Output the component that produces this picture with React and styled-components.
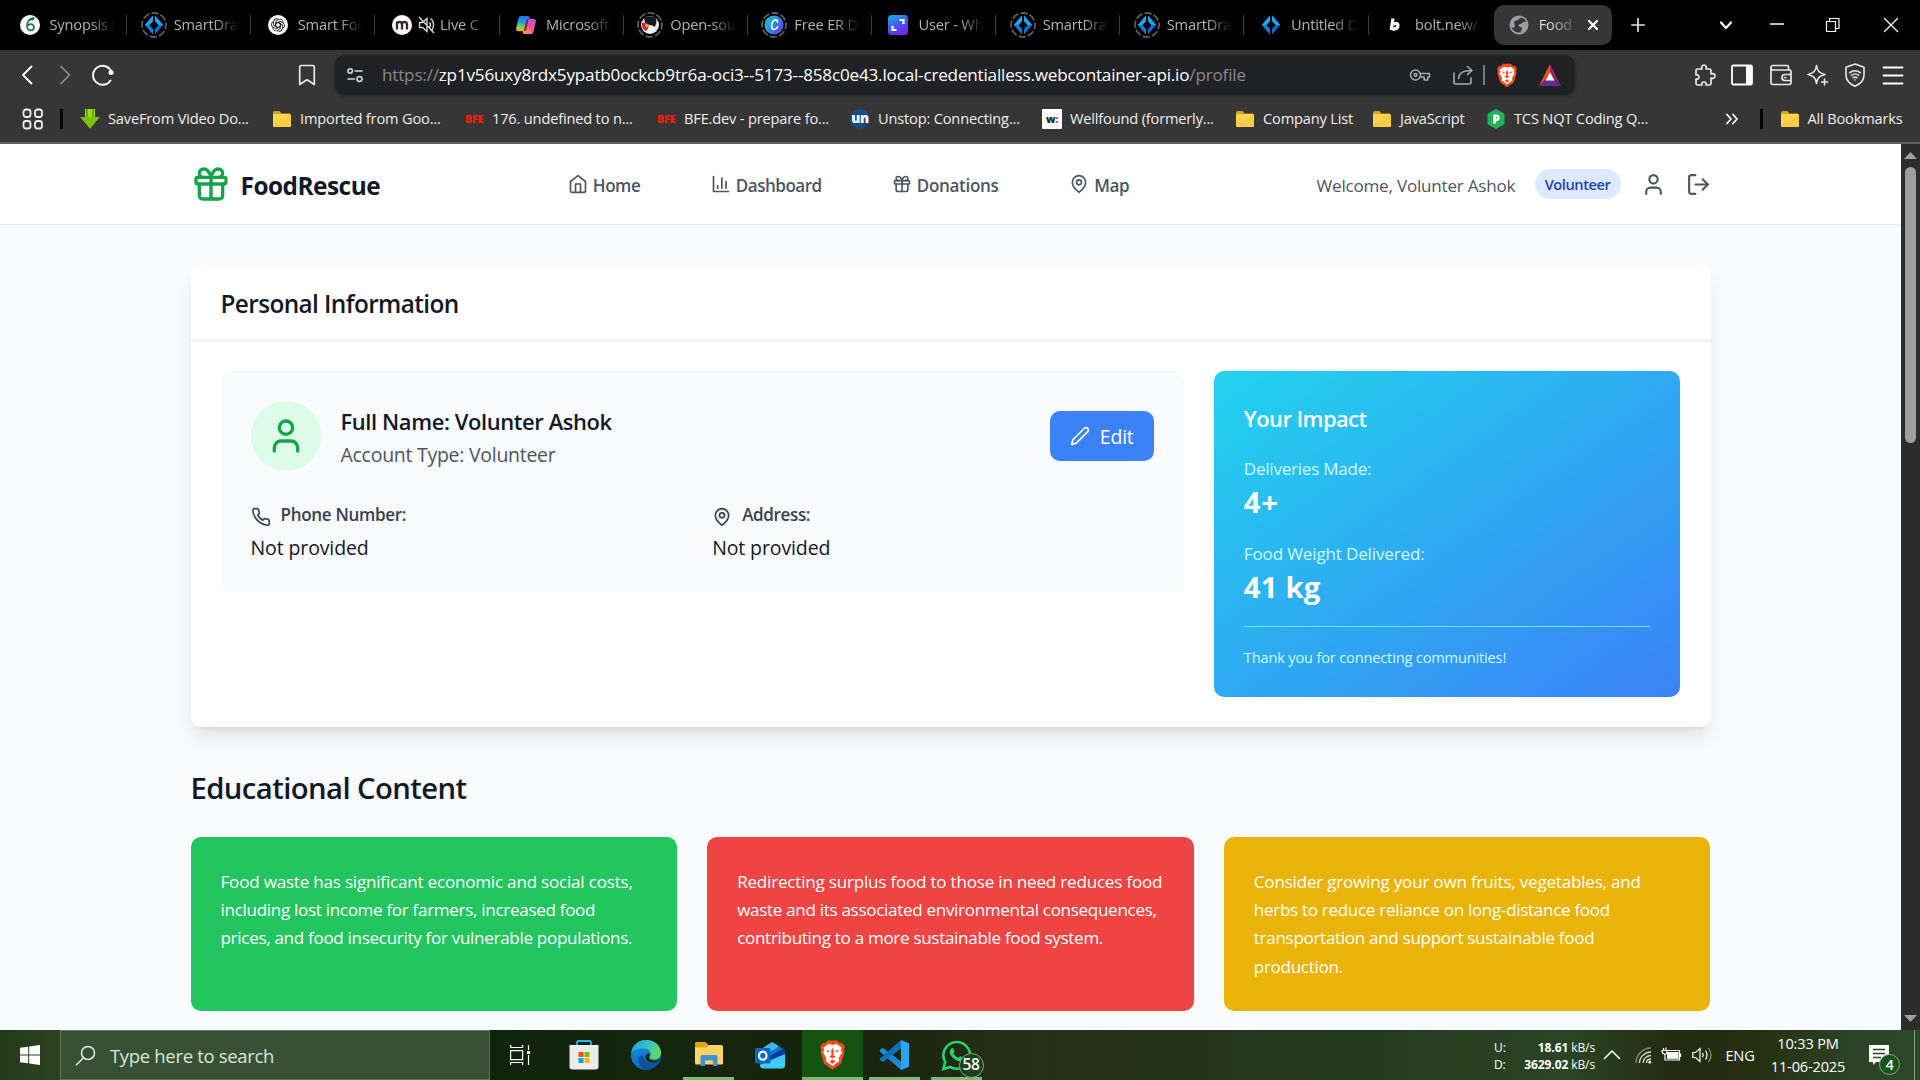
import React from "react";
import styled, { createGlobalStyle, css } from "styled-components";

const Global = createGlobalStyle`
  *, *::before, *::after { box-sizing: border-box; }
  html, body { margin: 0; padding: 0; background: #000; overflow: hidden; }
  body { font-family: "Open Sans", "Noto Sans", sans-serif; }
  svg { display: block; flex: none; }
`;

/* ---------- shared ---------- */

const Screen = styled.div`
  width: 1920px;
  height: 1080px;
  display: flex;
  flex-direction: column;
  overflow: hidden;
`;

const Text = styled.span`
  display: block;
  flex: none;
  white-space: nowrap;
  font-size: ${(p) => p.$size * 0.975}px;
  line-height: ${(p) => (p.$lh ? `${p.$lh + 2 * (p.$dy || 0)}px` : "normal")};
  margin-bottom: ${(p) => -2 * (p.$dy || 0)}px;
  font-weight: ${(p) => p.$weight || 400};
  color: ${(p) => p.$color || "inherit"};
  letter-spacing: ${(p) => (p.$ls === undefined ? -0.012 : p.$ls)}em;
  ${(p) => p.$w && css`width: ${p.$w}px;`}
`;

const Slot = styled.span`
  display: flex;
  align-items: center;
  justify-content: center;
  flex: none;
  width: ${(p) => p.$w}px;
  height: ${(p) => p.$h || p.$w}px;
  margin-left: ${(p) => p.$ml || 0}px;
`;

const Stroke = ({ size = 20, w = 2, color = "currentColor", children, box = 24 }) => (
  <svg width={size} height={size} viewBox={`0 0 ${box} ${box}`} fill="none" stroke={color} strokeWidth={w} strokeLinecap="round" strokeLinejoin="round">
    {children}
  </svg>
);

const GiftIcon = (p) => (
  <Stroke {...p}>
    <rect x="3" y="8" width="18" height="4" rx="1" />
    <path d="M12 8v13" />
    <path d="M19 12v7a2 2 0 0 1-2 2H7a2 2 0 0 1-2-2v-7" />
    <path d="M7.5 8a2.5 2.5 0 0 1 0-5A4.8 8 0 0 1 12 8a4.8 8 0 0 1 4.5-5 2.5 2.5 0 0 1 0 5" />
  </Stroke>
);
const HomeIcon = (p) => (
  <Stroke {...p}>
    <path d="m3 9 9-7 9 7v11a2 2 0 0 1-2 2H5a2 2 0 0 1-2-2z" />
    <polyline points="9 22 9 12 15 12 15 22" />
  </Stroke>
);
const ChartIcon = (p) => (
  <Stroke {...p}>
    <path d="M3 3v18h18M18 17V9M13 17V5M8 17v-3" />
  </Stroke>
);
const PinIcon = (p) => (
  <Stroke {...p}>
    <path d="M20 10c0 6-8 12-8 12s-8-6-8-12a8 8 0 0 1 16 0Z" />
    <circle cx="12" cy="10" r="3" />
  </Stroke>
);
const UserIcon = (p) => (
  <Stroke {...p}>
    <path d="M19 21v-2a4 4 0 0 0-4-4H9a4 4 0 0 0-4 4v2" />
    <circle cx="12" cy="7" r="4" />
  </Stroke>
);
const LogoutIcon = (p) => (
  <Stroke {...p}>
    <path d="M9 21H5a2 2 0 0 1-2-2V5a2 2 0 0 1 2-2h4" />
    <polyline points="16 17 21 12 16 7" />
    <line x1="21" x2="9" y1="12" y2="12" />
  </Stroke>
);
const PhoneIcon = (p) => (
  <Stroke {...p}>
    <path d="M22 16.92v3a2 2 0 0 1-2.18 2 19.79 19.79 0 0 1-8.63-3.07 19.5 19.5 0 0 1-6-6 19.79 19.79 0 0 1-3.07-8.67A2 2 0 0 1 4.11 2h3a2 2 0 0 1 2 1.72 12.84 12.84 0 0 0 .7 2.81 2 2 0 0 1-.45 2.11L8.09 9.91a16 16 0 0 0 6 6l1.27-1.27a2 2 0 0 1 2.11-.45 12.84 12.84 0 0 0 2.81.7A2 2 0 0 1 22 16.92z" />
  </Stroke>
);
const PencilIcon = (p) => (
  <Stroke {...p}>
    <path d="M17 3a2.85 2.83 0 1 1 4 4L7.5 20.5 2 22l1.5-5.5Z" />
  </Stroke>
);

/* ---------- tab strip ---------- */

const TabStrip = styled.div`
  flex: none;
  height: 50px;
  background: #000;
  display: flex;
  align-items: center;
  padding-left: 3px;
`;

const Tab = styled.div`
  flex: none;
  width: 124.15px;
  height: 50px;
  display: flex;
  align-items: center;
  padding-left: 11.5px;
`;

const TabLabel = styled.div`
  flex: 1;
  min-width: 0;
  overflow: hidden;
  margin-left: 5px;
  margin-right: 11px;
  padding-bottom: 2px;
  color: #b4b4b4;
  -webkit-mask-image: linear-gradient(90deg, #000 calc(100% - 24px), transparent);
  mask-image: linear-gradient(90deg, #000 calc(100% - 24px), transparent);
`;

const TabDivider = styled.i`
  flex: none;
  width: 1px;
  height: 20px;
  background: #3f3f3f;
`;

const ActiveTab = styled.div`
  flex: none;
  width: 118px;
  height: 40px;
  margin-left: 1px;
  border-radius: 10px;
  background: #363636;
  display: flex;
  align-items: center;
  padding-left: 15px;
  color: #dedede;
`;

const ActiveLabel = styled.div`
  width: 34px;
  overflow: hidden;
  margin-left: 10px;
  padding-bottom: 2px;
  -webkit-mask-image: linear-gradient(90deg, #000 35%, rgba(0, 0, 0, 0.2));
  mask-image: linear-gradient(90deg, #000 35%, rgba(0, 0, 0, 0.2));
`;

const Ring = () => (
  <circle cx="15" cy="15" r="12" fill="none" stroke="#5c5c5c" strokeWidth="1.8" strokeDasharray="7.4 2.02" strokeDashoffset="3" />
);
const DrawMark = () => (
  <g>
    <path d="M14 5.500v5.500l-3.600 4 3.600 4v5.500L5.800 15z" fill="#0a7fe0" />
    <path d="M16 5.500v5.500l3.600 4-3.600 4v5.500l8.200-9.500z" fill="#0a6fd0" />
    <path d="M14 5.500v5.500l-3.600 4H5.800zM16 5.500v5.500l3.600 4h4.600z" fill="#1ea6f2" />
  </g>
);

const favs = {
  synopsis: (
    <g>
      <circle cx="15" cy="15" r="10" fill="#fff" />
      <path d="M18 8c-3 .5-5.700 3.500-6 7.500M12.300 15.800a3.500 3.500 0 1 0 6.800 1.400 3.300 3.300 0 0 0-5.500-2.200" fill="none" stroke="#1d7a3c" strokeWidth="1.800" strokeLinecap="round" />
      <path d="M15 10.500c.5-2.500 2.500-3.500 5-3-.5 2.300-2.500 3.500-5 3z" fill="#1d7a3c" />
    </g>
  ),
  draw: (
    <g>
      <Ring />
      <DrawMark />
    </g>
  ),
  drawPlain: <DrawMark />,
  gpt: (
    <g>
      <circle cx="15" cy="15" r="10" fill="#fff" />
      <g fill="none" stroke="#222" strokeWidth=".9" strokeLinejoin="round">
        {[0, 60, 120, 180, 240, 300].map((a) => (
          <path key={a} transform={`rotate(${a} 15 15)`} d="M12.700 16.300v-5l2.900-1.700c2.400-1.300 4.800.6 4.600 3M12.700 13.600l2.300-1.300 2.300 1.300" />
        ))}
      </g>
    </g>
  ),
  m: (
    <g>
      <circle cx="15" cy="15" r="10" fill="#fff" />
      <path d="M10 19.500v-8M10 14.500c0-3.600 5-3.600 5 0v5M15 14.500c0-3.600 5-3.600 5 0v5" fill="none" stroke="#3d241c" strokeWidth="2.300" />
    </g>
  ),
  copilot: (
    <g>
      <path d="M10 6h7c1.500 0 2 1 1.500 2.500L15.500 19c-.5 1.500-1.300 2.200-2.800 2.200H8c-2.500 0-3.300-1.500-2.700-3.700l2-8.500C7.800 7 8.500 6 10 6z" fill="url(#cpA)" />
      <path d="M20 24h-6.500c-1.500 0-2-1-1.500-2.500L15 11c.5-1.500 1.300-2.200 2.800-2.200H22c2.500 0 3.300 1.500 2.700 3.700l-2 8.500c-.5 2-1.200 3-2.700 3z" fill="url(#cpB)" />
      <path d="M15 11c.5-1.500 1.300-2.200 2.800-2.200L15.500 19c-.5 1.500-1.300 2.200-2.800 2.200z" fill="#0a0a0a" opacity=".55" />
      <defs>
        <linearGradient id="cpA" x1="0" y1="0" x2="0" y2="1"><stop offset="0" stopColor="#1c6fe8" /><stop offset=".45" stopColor="#22a7d8" /><stop offset=".75" stopColor="#8fd04c" /><stop offset="1" stopColor="#f2b824" /></linearGradient>
        <linearGradient id="cpB" x1="1" y1="0" x2="0.200" y2="1"><stop offset="0" stopColor="#a05cf0" /><stop offset=".5" stopColor="#ee4f9a" /><stop offset="1" stopColor="#ff9d4a" /></linearGradient>
      </defs>
    </g>
  ),
  penguin: (
    <g>
      <Ring />
      <circle cx="15" cy="15" r="9" fill="#e9e7ec" />
      <path d="M9 8.500c3-3 9-3 12 0 1 3 0 7-2 9l-8-2z" fill="#17141c" />
      <path d="M7 13c3-1 6 1 7.500 4.500L11 21c-3-1-4.500-4.500-4-8z" fill="#c3262b" />
      <circle cx="12" cy="15.500" r="2" fill="#f0a13a" />
      <path d="M14 15c3 0 5 1 6 3-1 4-5 5.500-8 4.500z" fill="#fff" />
    </g>
  ),
  canva: (
    <g>
      <Ring />
      <circle cx="15" cy="15" r="9.500" fill="url(#cv)" />
      <path d="M18.500 12c0-3-3.500-2.700-5 .2-1.700 3.300-1 7.300 1.500 7.300 1.700 0 2.800-1.200 3.700-2.600" fill="none" stroke="#fff" strokeWidth="1.700" strokeLinecap="round" />
      <defs>
        <linearGradient id="cv" x1="0" y1="0.200" x2="1" y2="0.900"><stop offset="0" stopColor="#12c4cc" /><stop offset=".5" stopColor="#2f86e6" /><stop offset="1" stopColor="#7a2ce8" /></linearGradient>
      </defs>
    </g>
  ),
  board: (
    <g>
      <rect x="5" y="5" width="20" height="20" rx="3.500" fill="url(#bd)" />
      <path d="M16.500 10h4v4M13.500 20h-4v-4" fill="none" stroke="#fff" strokeWidth="2.200" />
      <defs>
        <linearGradient id="bd" x1="0" y1="0" x2="0.500" y2="1"><stop offset="0" stopColor="#12b9dd" /><stop offset=".5" stopColor="#3d62ee" /><stop offset="1" stopColor="#7327e6" /></linearGradient>
      </defs>
    </g>
  ),
  bolt: <path d="M13 8.500l-1.800 11.500M11.600 18c.8 1.700 6 1.300 6.400-2.300.3-3-3.500-3-5.200-.5" fill="none" stroke="#fff" strokeWidth="3.200" strokeLinejoin="round" />,
};

const Favicon = ({ kind }) => (
  <svg width="30" height="30" viewBox="0 0 30 30">{favs[kind]}</svg>
);

const MuteIcon = () => (
  <svg width="17" height="18" viewBox="0 0 17 18" fill="none" stroke="#d6d6d6" strokeWidth="1.400">
    <path d="M1.500 6.500h3L9 2.500v13l-4.500-4h-3zM1 1l15 16M11.500 6.500q2 2.500 0 5M12.500 2.500c3.500 2 4 8.500 1.500 11.500" />
  </svg>
);

const tabs = [
  ["synopsis", "Synopsis E"],
  ["draw", "SmartDraw"],
  ["gpt", "Smart Foo"],
  ["m", "Live C"],
  ["copilot", "Microsoft"],
  ["penguin", "Open-sou"],
  ["canva", "Free ER D"],
  ["board", "User - Wh"],
  ["draw", "SmartDraw"],
  ["draw", "SmartDraw"],
  ["drawPlain", "Untitled D"],
  ["bolt", "bolt.new/"],
];

/* ---------- toolbar ---------- */

const Toolbar = styled.div`
  flex: none;
  height: 94px;
  background: #363636;
  border-bottom: 2px solid #606060;
  display: flex;
  flex-direction: column;
`;

const NavRow = styled.div`
  height: 50px;
  display: flex;
  align-items: center;
  color: #e8e8e8;
`;

const UrlBar = styled.div`
  width: 1240px;
  height: 40px;
  margin-left: 17px;
  border-radius: 10px;
  background: #202124;
  box-shadow: 0 1px 4px rgba(0, 0, 0, 0.3);
  display: flex;
  align-items: center;
  color: #fff;
`;

const UrlText = styled.div`
  width: 1007px;
  margin-left: 19px;
  margin-top: -1px;
  white-space: nowrap;
  font-size: 17.1px;
  letter-spacing: -0.011em;
`;

const Dim = styled.span`
  color: #898a8c;
`;

const Bar = styled.i`
  flex: none;
  width: ${(p) => p.$w || 1}px;
  height: 20px;
  margin-left: ${(p) => p.$ml}px;
  background: ${(p) => p.$color};
`;

const BookmarkRow = styled.div`
  height: 38px;
  display: flex;
  align-items: center;
  color: #efefef;
`;

const BookmarkList = styled.div`
  display: flex;
  margin-left: 17.5px;
`;

const Bookmark = styled.div`
  flex: none;
  width: ${(p) => p.$w}px;
  display: flex;
  align-items: center;
  gap: 8px;
  & > span { padding-bottom: 1.5px; }
`;

const TextMark = styled.b`
  width: 20px;
  flex: none;
  display: flex;
  align-items: center;
  justify-content: center;
  height: ${(p) => p.$h || 20}px;
  border-radius: ${(p) => p.$r || 0};
  background: ${(p) => p.$bg || "transparent"};
  color: ${(p) => p.$fg};
  font-size: ${(p) => p.$fs}px;
  font-weight: 800;
  line-height: 1;
  letter-spacing: -0.3px;
`;

const Red = styled.span`
  color: #ec2e3a;
`;

const FolderMark = () => (
  <svg width="20" height="20" viewBox="0 0 20 20">
    <path d="M1 3.500a1.500 1.500 0 0 1 1.500-1.500h5l2 2.500H18v4H1z" fill="#d9a017" />
    <rect x="1" y="5" width="18" height="13" rx="1.200" fill="#ffd24d" />
    <path d="M1 15v1.800A1.200 1.200 0 0 0 2.200 18h15.600a1.200 1.200 0 0 0 1.200-1.200V6z" fill="#f7c640" opacity=".6" />
  </svg>
);
const SaveMark = () => (
  <svg width="20" height="20" viewBox="0 0 20 20">
    <path d="M5 0h10v8h4.700L10 19.500.3 8H5z" fill="#9be000" />
    <path d="M6.500 0h1v8h-1zM12.500 0h1v8h-1z" fill="#3f6b00" />
    <path d="M.3 8H19.700L10 19.500z" fill="#7cc000" />
  </svg>
);
const HexMark = () => (
  <svg width="20" height="20" viewBox="0 0 20 20">
    <path d="M10 0l8.500 4.800v10.400L10 20l-8.500-4.800V4.800z" fill="#20b35a" />
    <path d="M8.600 14.500V6.800h1.700a2.100 2.100 0 0 1 0 4.200H8.600" fill="none" stroke="#fff" strokeWidth="2.600" />
  </svg>
);

const marks = {
  save: <SaveMark />,
  folder: <FolderMark />,
  bfe: <TextMark $fg="#f01f0c" $fs={10.8}>BFE</TextMark>,
  un: <TextMark $fg="#fff" $fs={13.5} $bg="#1c4980" $r="50%">un</TextMark>,
  well: <TextMark $fg="#222" $fs={10.5} $bg="#fff" $r="1px">w<Red>:</Red></TextMark>,
  hex: <HexMark />,
};

/* icon, label, distance to the start of the next bookmark */
const bookmarks = [
  ["save", "SaveFrom Video Do...", 192],
  ["folder", "Imported from Goo...", 192],
  ["bfe", "176. undefined to n...", 192],
  ["bfe", "BFE.dev - prepare fo...", 194],
  ["un", "Unstop: Connecting...", 192],
  ["well", "Wellfound (formerly...", 193],
  ["folder", "Company List", 137],
  ["folder", "JavaScript", 114],
  ["hex", "TCS NQT Coding Q...", 164],
];

const BraveMark = ({ w, h }) => (
  <svg width={w} height={h} viewBox="0 0 24 28">
    <path d="M12 0h4.500l2.500 2.700 2.300-.3L23.800 6l-.8 2.500.5 2.500-3.500 11.500L12 28 4 22.500.5 11 1 8.500.2 6l2.500-3.600 2.300.3L7.500 0z" fill="#fb4a1c" />
    <path d="M12 4.500l4-1 4.800 3.600-1 2.400 1.300 2-3.300 5.500.7 2.800-6.500 4.700-6.500-4.700.7-2.800-3.300-5.500 1.300-2-1-2.400L8 3.500z" fill="#fff" />
    <path d="M12 6.800l1.400 3.700-.5 3.500 2.100 1.600-3 1.700-3-1.700L11.100 14l-.5-3.500zM6 9.300l3.700.9-2.400 1.400zM18 9.300l-3.700.9 2.400 1.400zM9 20.300l3-1.900 3 1.900-3 2.100z" fill="#fb4a1c" />
  </svg>
);

/* ---------- page ---------- */

const Viewport = styled.div`
  flex: none;
  height: 886px;
  display: flex;
  background: #f9fafb;
`;

const Page = styled.div`
  width: 1901px;
  height: 886px;
  overflow: hidden;
  color: #111827;
`;

const Scrollbar = styled.div`
  width: 19px;
  background: #2c2c2c;
  display: flex;
  flex-direction: column;
  align-items: center;
  padding: 8px 0 7px;
`;

const Thumb = styled.i`
  width: 11px;
  height: 276px;
  margin: 7px 0 auto;
  border-radius: 6px;
  background: #9f9f9f;
`;

const SiteHeader = styled.header`
  height: 81px;
  background: #fff;
  border-bottom: 1px solid #e5e7eb;
  display: flex;
  align-items: center;
  padding: 0 190.5px;
  color: #4b5563;
`;

const Brand = styled.div`
  display: flex;
  align-items: center;
  gap: 10px;
  width: 377.5px;
  color: #16a34a;
  & > span { padding-top: 2px; }
`;

const SiteNav = styled.nav`
  display: flex;
  width: 749px;
`;

const NavItem = styled.a`
  display: flex;
  align-items: center;
  gap: 5px;
  width: ${(p) => p.$w}px;
  & > span { padding-top: 2px; }
`;

const Badge = styled.div`
  width: 86px;
  height: 30px;
  margin: 0 20px 0 20px;
  border-radius: 15px;
  background: #dbeafe;
  display: flex;
  align-items: center;
  justify-content: center;
`;

const Greeting = styled.div`
  width: 198px;
  padding-top: 2px;
`;

const Main = styled.main`
  padding: 40px 190.5px 0;
`;

const Card = styled.section`
  border-radius: 10px;
  background: #fff;
  box-shadow: 0 12.5px 18.75px -3.75px rgba(0, 0, 0, 0.1), 0 5px 7.5px -5px rgba(0, 0, 0, 0.1);
`;

const CardHead = styled.div`
  height: 76px;
  padding: 20px 30px;
  border-bottom: 1px solid #e5e7eb;
`;

const CardBody = styled.div`
  padding: 30px;
  display: grid;
  grid-template-columns: repeat(3, 1fr);
  gap: 30px;
  align-items: start;
`;

const Details = styled.div`
  grid-column: span 2;
  height: 221px;
  border-radius: 10px;
  background: #f9fafb;
  padding: 30px;
`;

const Profile = styled.div`
  display: flex;
  align-items: center;
  height: 70px;
  margin-bottom: 30px;
`;

const Avatar = styled.div`
  width: 70px;
  height: 70px;
  border-radius: 50%;
  background: #dcfce7;
  color: #16a34a;
  display: flex;
  align-items: center;
  justify-content: center;
  margin-right: 20px;
`;

const Identity = styled.div`
  height: 65px;
`;

const EditButton = styled.button`
  width: 104px;
  height: 50px;
  margin-left: auto;
  padding: 0 20px;
  border: 0;
  border-radius: 10px;
  background: #3b82f6;
  color: #fff;
  font-family: inherit;
  display: flex;
  align-items: center;
  gap: 10px;
`;

const Fields = styled.div`
  display: grid;
  grid-template-columns: 1fr 1fr;
  gap: 20px;
`;

const FieldLabel = styled.div`
  display: flex;
  gap: 10px;
  height: 31px;
  color: #374151;
  & > svg { margin-top: 6px; }
`;

const Impact = styled.div`
  height: 326px;
  border-radius: 10px;
  padding: 30px;
  background: linear-gradient(to bottom right, #22d3ee, #3b82f6);
  color: #fff;
`;

const Stat = styled.div`
  height: 65px;
  margin-top: 20px;
`;

const Thanks = styled.div`
  margin-top: 20px;
  padding-top: 20px;
  border-top: 1px solid #67e8f9;
`;

const Tips = styled.div`
  display: grid;
  grid-template-columns: repeat(3, 1fr);
  gap: 30px;
  margin-top: 30px;
`;

const Tip = styled.article`
  height: 174px;
  border-radius: 10px;
  padding: 30.5px 30px 29px;
  background: ${(p) => p.$bg};
  color: #fff;
`;

const Section = styled.section`
  padding-top: 40px;
`;

const SectionTitle = styled.div`
  height: 40px;
`;

const tips = [
  ["#22c55e", ["Food waste has significant economic and social costs,", "including lost income for farmers, increased food", "prices, and food insecurity for vulnerable populations."]],
  ["#ef4444", ["Redirecting surplus food to those in need reduces food", "waste and its associated environmental consequences,", "contributing to a more sustainable food system."]],
  ["#eab308", ["Consider growing your own fruits, vegetables, and", "herbs to reduce reliance on long-distance food", "transportation and support sustainable food", "production."]],
];

/* ---------- taskbar ---------- */

const Taskbar = styled.footer`
  flex: none;
  height: 50px;
  display: flex;
  background: linear-gradient(90deg, #253a19 0, #2c421f 60px, #10230c 490px, #14260e 640px, #17230d 860px, #262e16 1010px, #23341a 1200px, #283f20 1470px, #2a4424 1570px, #23290f 1680px, #25300f 1760px, #2a4425 1850px, #2c4828 1920px);
  color: #fff;
`;

const Start = styled.div`
  width: 60px;
  display: flex;
  align-items: center;
  padding-left: 20px;
`;

const Search = styled.div`
  width: 430px;
  background: #365233;
  border: 1px solid #5d7b5c;
  display: flex;
  align-items: center;
  gap: 14px;
  padding-left: 14px;
`;

const TaskItem = styled.div`
  width: ${(p) => p.$w}px;
  margin-left: ${(p) => p.$ml || 0}px;
  height: 50px;
  display: flex;
  align-items: center;
  justify-content: center;
  background: ${(p) => (p.$active ? "#14530f" : "transparent")};
  border-bottom: 3px solid ${(p) => (p.$open || p.$active ? "#7db979" : "transparent")};
  background-clip: padding-box;
  padding-top: 3px;
`;

const Speed = styled.div`
  width: 101px;
  margin-left: auto;
  display: flex;
  flex-direction: column;
  justify-content: center;
  padding-top: 1px;
`;

const SpeedRow = styled.div`
  display: flex;
  justify-content: space-between;
  font-size: 12px;
  line-height: 17px;
  white-space: nowrap;
  letter-spacing: -0.1px;
`;

const Clock = styled.div`
  width: 100px;
  margin-left: 3px;
  display: flex;
  flex-direction: column;
  align-items: center;
  justify-content: center;
`;

const Notice = styled.div`
  position: relative;
  width: 36px;
  margin-left: 11px;
  display: flex;
  align-items: center;
`;

const CountBadge = styled.div`
  position: absolute;
  left: ${(p) => p.$x}px;
  top: ${(p) => p.$y}px;
  width: ${(p) => p.$s}px;
  height: ${(p) => p.$s}px;
  border-radius: 50%;
  background: ${(p) => p.$bg};
  border: 1px solid #8ba489;
  font-size: ${(p) => p.$fs}px;
  font-weight: 600;
  line-height: 1;
  letter-spacing: -0.3px;
  display: flex;
  align-items: center;
  justify-content: center;
`;

const Chat = styled.div`
  position: relative;
`;

const Peek = styled.i`
  width: 1px;
  margin-left: 9px;
  margin-right: 5px;
  background: #8d9a88;
`;

const Tray = styled.div`
  display: flex;
`;

export default function App() {
  return (
    <Screen>
      <Global />
      <TabStrip>
        {tabs.map(([icon, label], i) => (
          <Tab key={i}>
            <Favicon kind={icon} />
            {icon === "m" && <Slot $w={17} $ml={1}><MuteIcon /></Slot>}
            <TabLabel><Text $size={15}>{label}</Text></TabLabel>
            {i < tabs.length - 1 && <TabDivider />}
          </Tab>
        ))}
        <ActiveTab>
          <svg width="20" height="20" viewBox="0 0 20 20">
            <circle cx="10" cy="10" r="9.500" fill="#9aa0a6" />
            <path d="M11.500 2.500c2.500.4 4.700 2 5.800 4-1.500.8-3.300 0-4.300 1.500-.5 1.600-3.500.5-3.500 2.500 0 1.500 3 1 3.500 2.500.4 1.500-1.500 2-1.500 4.500C7 18 4 16 2.500 12.500c2 .5 3.500 0 3.500-1.500 0-1.700-1-1.800-1-3.500C5 5 9.500 6 11.500 2.500z" fill="#363636" />
          </svg>
          <ActiveLabel><Text $size={15}>Food</Text></ActiveLabel>
          <Slot $w={12} $ml={14.500}><Stroke size={12} box={12} w={2.2} color="#fff"><path d="M2 2l8 8M10 2l-8 8" /></Stroke></Slot>
        </ActiveTab>
        <Slot $w={14} $ml={19.5}><Stroke size={14} box={14} w={1.700} color="#e4e4e4"><path d="M7 .8v12.400M.8 7h12.400" /></Stroke></Slot>
        <Slot $w={14} $ml={74}><Stroke size={14} box={14} w={2.200} color="#fff"><path d="M2 4.500l5 5.500 5-5.500" /></Stroke></Slot>
        <Slot $w={14} $ml={37}><Stroke size={14} box={14} w={1.300} color="#fff"><path d="M.5 6h13" /></Stroke></Slot>
        <Slot $w={16} $ml={41}><Stroke size={16} box={16} w={1.200} color="#fff"><path d="M1.500 4.500h9v10h-9zM4.500 4V1.500h9.500v10h-3" /></Stroke></Slot>
        <Slot $w={16} $ml={42}><Stroke size={16} box={16} w={1.300} color="#fff"><path d="M1.500 1.500l13 13M14.500 1.500l-13 13" /></Stroke></Slot>
      </TabStrip>

      <Toolbar>
        <NavRow>
          <Slot $w={22} $ml={16}><Stroke size={22} box={22} w={1.800} color="#fff"><path d="M15.500 2.500L7 11l8.500 8.500" /></Stroke></Slot>
          <Slot $w={22} $ml={16}><Stroke size={22} box={22} w={1.700} color="#8f8f8f"><path d="M7 2.500l8.500 8.500L7 19.500" /></Stroke></Slot>
          <Slot $w={24} $ml={15}>
            <svg width="24" height="24" viewBox="0 0 24 24"><path d="M19.500 17.500A9.500 9.500 0 1 1 20.500 9" fill="none" stroke="#fff" strokeWidth="1.900" strokeLinecap="round" /><circle cx="20" cy="9.500" r="2.500" fill="#fff" /></svg>
          </Slot>
          <Slot $w={22} $ml={181}><Stroke size={22} box={22} w={1.700}><path d="M5.200 1.500h11.600a1.500 1.500 0 0 1 1.500 1.500v17.500L11 15.800l-7.300 4.700V3a1.500 1.500 0 0 1 1.500-1.500z" /></Stroke></Slot>
          <UrlBar>
            <Slot $w={16} $ml={12}><Stroke size={16} box={16} w={1.600} color="#d7d8da"><circle cx="3.200" cy="4" r="2.200" /><path d="M8 4h7M1 12h6.500" /><circle cx="12.500" cy="12" r="2.500" /></Stroke></Slot>
            <UrlText><Dim>https://</Dim>zp1v56uxy8rdx5ypatb0ockcb9tr6a-oci3--5173--858c0e43.local-credentialless.webcontainer-api.io<Dim>/profile</Dim></UrlText>
            <Slot $w={22} $ml={20}><Stroke size={22} box={22} w={1.500} color="#a9aaac"><circle cx="6.500" cy="11" r="5" /><circle cx="6.500" cy="11" r="1.400" /><path d="M11.500 9.500H20.500v3.500h-1.700v3h-3.600v-3h-3.700" /></Stroke></Slot>
            <Slot $w={22} $ml={21}><Stroke size={22} box={22} w={1.600} color="#a9aaac"><path d="M2 9v9.500a1.500 1.500 0 0 0 1.500 1.500h14a1.500 1.500 0 0 0 1.500-1.500V14M6.500 14.500C7 8.500 11 6.500 19.500 6.500M15.500 2.500l4.500 4-4.500 4" /></Stroke></Slot>
            <Bar $ml={9} $w={1.5} $color="#77787a" />
            <Slot $w={20} $h={26} $ml={12}><BraveMark w={20} h={25} /></Slot>
            <Slot $w={22} $ml={22}>
              <svg width="22" height="22" viewBox="0 0 22 22"><path d="M11 0v8L6.500 15.500 0 22z" fill="#ff4724" /><path d="M11 0l11 22-6.500-6.500L11 8z" fill="#9e1f63" /><path d="M0 22l6.500-6.500h9L22 22z" fill="#662d91" /><path d="M11 8l4.500 8.500h-9z" fill="#fff" /></svg>
            </Slot>
          </UrlBar>
          <Slot $w={24} $ml={118}><Stroke size={24} w={1.700}><path d="M3 7.500a1.500 1.500 0 0 1 1.500-1.500H9c-.8-1.600-.2-4 2-4s2.800 2.400 2 4h3.500A1.500 1.500 0 0 1 18 7.500V11c1.700-.8 4-.2 4 2s-2.300 2.800-4 2v5.500a1.500 1.500 0 0 1-1.500 1.500H13c.6-1.700-.2-3-2-3s-2.600 1.300-2 3H4.500A1.500 1.500 0 0 1 3 20.500V16c1.700.5 3-.4 3-2s-1.300-2.600-3-2z" /></Stroke></Slot>
          <Slot $w={22} $ml={14}>
            <svg width="22" height="22" viewBox="0 0 22 22"><rect x="1" y="1.500" width="20" height="19" rx="1.500" fill="none" stroke="#fff" strokeWidth="1.800" /><path d="M15 1.500h6v19h-6z" fill="#fff" /></svg>
          </Slot>
          <Slot $w={22} $ml={17}><Stroke size={22} box={22} w={1.700}><path d="M18.500 6V3A1.500 1.500 0 0 0 17 1.500H3A1.800 1.800 0 0 0 1 3.500v15A1.800 1.800 0 0 0 3 20.500h16.500A1.500 1.500 0 0 0 21 19V7.500A1.500 1.500 0 0 0 19.500 6H3A2 2 0 0 1 1 4M21 10.500h-6a3 3 0 0 0 0 6h6M15 13.500h.8" /></Stroke></Slot>
          <Slot $w={22} $ml={15}><Stroke size={22} box={22} w={1.600}><path d="M9.500 1.500C10.300 7 12 9 18 10.500 12 12 10.300 14 9.500 19.500 8.700 14 7 12 1 10.500 7 9 8.700 7 9.500 1.500z" /><path d="M17.500 15v6M14.500 18h6" /></Stroke></Slot>
          <Slot $w={22} $ml={15}><Stroke size={24} w={1.600}><path d="M12 1l9 3.200v8C21 17.500 17 21 12 23.200 7 21 3 17.500 3 12.200v-8z" /><path d="M6.800 9.700c3-2.700 7.400-2.700 10.400 0M8.500 12.300c2-1.800 5-1.800 7 0M10.200 14.700c1.100-.9 2.500-.9 3.600 0M12 16.900v.1" /></Stroke></Slot>
          <Slot $w={22} $ml={16}><Stroke size={22} box={22} w={1.800} color="#fff"><path d="M1.500 3.500h19M1.500 11.500h19M1.500 19.500h19" /></Stroke></Slot>
        </NavRow>
        <BookmarkRow>
          <Slot $w={22} $ml={22}><Stroke size={22} box={22} w={1.800}><rect x="1.500" y="1.500" width="7" height="7.500" rx="2.500" /><rect x="13" y="1.500" width="7" height="7.500" rx="2.500" /><rect x="1.500" y="13" width="7" height="7.500" rx="2.500" /><rect x="13" y="13" width="7" height="7.500" rx="2.500" /></Stroke></Slot>
          <Bar $ml={16} $w={2.5} $color="#000" />
          <BookmarkList>
            {bookmarks.map(([icon, label, w], i) => (
              <Bookmark key={i} $w={w}>{marks[icon]}<Text $size={15}>{label}</Text></Bookmark>
            ))}
          </BookmarkList>
          <Slot $w={14} $ml={75}><Stroke size={14} box={14} w={1.800} color="#fff"><path d="M2 2.500L6 7l-4 4.500M8 2.500L12 7l-4 4.500" /></Stroke></Slot>
          <Bar $ml={21} $w={2.5} $color="#000" />
          <Slot $w={17} />
          <Bookmark $w={124}><FolderMark /><Text $size={15}>All Bookmarks</Text></Bookmark>
        </BookmarkRow>
      </Toolbar>

      <Viewport>
        <Page>
          <SiteHeader>
            <Brand><GiftIcon size={40} /><Text $size={25} $weight={700} $color="#111827" $ls={-0.02}>FoodRescue</Text></Brand>
            <SiteNav>
              <NavItem $w={143}><HomeIcon /><Text $size={17.5} $weight={600} $ls={-0.028}>Home</Text></NavItem>
              <NavItem $w={181}><ChartIcon /><Text $size={17.5} $weight={600} $ls={-0.03}>Dashboard</Text></NavItem>
              <NavItem $w={177.5}><GiftIcon /><Text $size={17.5} $weight={600} $ls={-0.02}>Donations</Text></NavItem>
              <NavItem $w={100}><PinIcon /><Text $size={17.5} $weight={600} $ls={-0.028}>Map</Text></NavItem>
            </SiteNav>
            <Greeting><Text $size={17.5}>Welcome, Volunter Ashok</Text></Greeting>
            <Badge><Text $size={15} $weight={600} $ls={-0.03} $color="#1e40af">Volunteer</Text></Badge>
            <UserIcon size={25} />
            <Slot $w={25} $ml={20}><LogoutIcon size={25} /></Slot>
          </SiteHeader>
          <Main>
            <Card>
              <CardHead><Text $size={25} $lh={35} $dy={1} $weight={600} $ls={-0.025}>Personal Information</Text></CardHead>
              <CardBody>
                <Details>
                  <Profile>
                    <Avatar><UserIcon size={40} /></Avatar>
                    <Identity>
                      <Text $size={22.5} $lh={35} $weight={600} $ls={-0.018}>Full Name: Volunter Ashok</Text>
                      <Text $size={20} $lh={30} $dy={1} $ls={-0.014} $color="#4b5563">Account Type: Volunteer</Text>
                    </Identity>
                    <EditButton><PencilIcon /><Text $size={20}>Edit</Text></EditButton>
                  </Profile>
                  <Fields>
                    <div>
                      <FieldLabel><PhoneIcon /><Text $size={17.5} $lh={25} $dy={1} $weight={600} $ls={-0.018}>Phone Number:</Text></FieldLabel>
                      <Text $size={20} $lh={30} $dy={1} $ls={-0.006}>Not provided</Text>
                    </div>
                    <div>
                      <FieldLabel><PinIcon /><Text $size={17.5} $lh={25} $dy={1} $weight={600} $ls={-0.022}>Address:</Text></FieldLabel>
                      <Text $size={20} $lh={30} $dy={1} $ls={-0.006}>Not provided</Text>
                    </div>
                  </Fields>
                </Details>
                <Impact>
                  <Text $size={22.5} $lh={35} $weight={600} $ls={-0.026}>Your Impact</Text>
                  <Stat>
                    <Text $size={17.5} $lh={25} $dy={0.5} $ls={-0.014} $color="#cffafe">Deliveries Made:</Text>
                    <Text $size={30} $lh={40} $dy={1} $weight={700} $ls={0.02}>4+</Text>
                  </Stat>
                  <Stat>
                    <Text $size={17.5} $lh={25} $dy={0.5} $ls={-0.009} $color="#cffafe">Food Weight Delivered:</Text>
                    <Text $size={30} $lh={40} $dy={1} $weight={700} $ls={0.007}>41 kg</Text>
                  </Stat>
                  <Thanks><Text $size={15} $lh={20} $dy={0.5} $color="#cffafe">Thank you for connecting communities!</Text></Thanks>
                </Impact>
              </CardBody>
            </Card>
            <Section>
              <SectionTitle><Text $size={30} $lh={40} $dy={1} $weight={600} $ls={-0.02}>Educational Content</Text></SectionTitle>
              <Tips>
                {tips.map(([bg, lines]) => (
                  <Tip key={bg} $bg={bg}>
                    {lines.map((l, i) => <Text key={l} $size={17.5} $lh={28.44} $ls={i ? -0.018 : -0.012}>{l}</Text>)}
                  </Tip>
                ))}
              </Tips>
            </Section>
          </Main>
        </Page>
        <Scrollbar>
          <svg width="13" height="8" viewBox="0 0 13 8"><path d="M6.500 0L13 7H0z" fill="#9f9f9f" /></svg>
          <Thumb />
          <svg width="13" height="8" viewBox="0 0 13 8"><path d="M0 0h13L6.500 7z" fill="#9f9f9f" /></svg>
        </Scrollbar>
      </Viewport>

      <Taskbar>
        <Start>
          <svg width="20" height="20" viewBox="0 0 20 20" fill="#fff"><path d="M0 2.800l8.200-1.100v7.800H0zM9.200 1.500L20 0v9.500H9.200zM0 10.500h8.200v7.800L0 17.200zM9.200 10.500H20V20L9.200 18.500z" /></svg>
        </Start>
        <Search>
          <svg width="21" height="21" viewBox="0 0 21 21" fill="none" stroke="#e6ebe5" strokeWidth="1.500"><circle cx="13" cy="8" r="6.500" /><path d="M8.500 12.800L1 20.200" /></svg>
          <Text $size={19} $color="#dde4dc" $ls={-0.018}>Type here to search</Text>
        </Search>
        <TaskItem $w={60}>
          <svg width="20" height="20" viewBox="0 0 20 20" fill="none" stroke="#fff" strokeWidth="1.200"><path d="M.6 0v2.500h12V0M.6 20v-2.500h12V20M.6 5.600h12v9H.6zM18.500 0v5M18.500 10v10" /><rect x="17" y="6" width="3" height="3" fill="#fff" stroke="none" /></svg>
        </TaskItem>
        <TaskItem $w={63} $ml={2}>
          <svg width="30" height="30" viewBox="0 0 30 30"><path d="M8 5V2.500a1.500 1.500 0 0 1 1.500-1.500h11A1.500 1.500 0 0 1 22 2.500V5" fill="none" stroke="#2fb4e8" strokeWidth="1.800" /><path d="M.5 5h29v21.500a3 3 0 0 1-3 3h-23a3 3 0 0 1-3-3z" fill="#ececec" /><path d="M9.500 12h5v5h-5z" fill="#f25022" /><path d="M15.500 12h5v5h-5z" fill="#7fba00" /><path d="M9.500 18h5v5h-5z" fill="#00a4ef" /><path d="M15.500 18h5v5h-5z" fill="#ffb900" /></svg>
        </TaskItem>
        <TaskItem $w={62}>
          <svg width="30" height="30" viewBox="0 0 30 30">
            <defs>
              <linearGradient id="eg" x1="0" y1="0.300" x2="1" y2="0.600"><stop offset="0" stopColor="#1fa0dc" /><stop offset=".5" stopColor="#36c4c8" /><stop offset="1" stopColor="#63dc52" /></linearGradient>
              <linearGradient id="eb" x1="0" y1="0" x2="0.400" y2="1"><stop offset="0" stopColor="#1b8fdc" /><stop offset="1" stopColor="#0b6bc6" /></linearGradient>
            </defs>
            <circle cx="15" cy="15" r="15" fill="url(#eb)" />
            <path d="M12 15c1 7 8 10 16 6.500C25.500 27 20 30 15 30 9 29 6 23 8 17z" fill="#11509a" />
            <path d="M.2 13C1 5 7.500 0 15 0c9 0 15 6 15 12.500 0 4.500-3 7-6.500 7-4 0-5-1.500-5-2.500s1-1.500 1-3.500c0-3-3-5-7-5C7 8.500 2 10 .2 13z" fill="url(#eg)" />
            <path d="M19 14.500c0 1.500-1 1.700-1 3 0 2 3 3.500 6.500 3 2.500-.4 4-1.500 4.800-2.500-1 3-3.800 4.500-7.300 4.500-4.500 0-7.500-2.500-7.500-5.500 0-2 1.500-3.500 3-3.500 1 0 1.500.4 1.500 1z" fill="#16270f" />
          </svg>
        </TaskItem>
        <TaskItem $w={51} $ml={6} $open>
          <svg width="28" height="26" viewBox="0 0 28 26"><path d="M0 1.500A1.500 1.500 0 0 1 1.500 0h9L14 3.500h-1V8H0z" fill="#e2a40c" /><path d="M0 5.500h11l3-2.500h12.500A1.500 1.500 0 0 1 28 4.500V21a1.500 1.500 0 0 1-1.500 1.500h-25A1.500 1.500 0 0 1 0 21z" fill="#fdd566" /><path d="M5.500 24V14.500A1.500 1.500 0 0 1 7 13h14a1.500 1.500 0 0 1 1.500 1.500V24h-4.500v-5.500h-8V24z" fill="#3f92d2" /></svg>
        </TaskItem>
        <TaskItem $w={60} $ml={6}>
          <svg width="30" height="28" viewBox="0 0 30 28"><path d="M5 9L17 1l13 8v14l-3 3.500H7L5 24z" fill="#1574cf" /><path d="M8 7l9-6 7 4.300L9 15z" fill="#42b4f0" /><path d="M11 17L28 7.500l2 2v4L18 20z" fill="#0a3f99" /><path d="M30 13v11.500a3 3 0 0 1-3 3H8.500A3.500 3.500 0 0 1 5 24z" fill="#40cdf5" /><rect x="0" y="7" width="15.500" height="15.500" rx="1.500" fill="#1066c0" /><ellipse cx="7.800" cy="14.700" rx="3.700" ry="4" fill="none" stroke="#fff" strokeWidth="2.200" /></svg>
        </TaskItem>
        <TaskItem $w={61} $ml={1.5} $active><BraveMark w={25} h={30} /></TaskItem>
        <TaskItem $w={51} $ml={6} $open>
          <svg width="30" height="30" viewBox="0 0 30 30"><path d="M22 0l8 3.500v23L22 30 1 11.500a1 1 0 0 1 0-1.500l1.800-1.700a1.500 1.500 0 0 1 1.700 0L22 21.500z" fill="#2489d3" /><path d="M22 0v8.500L4.500 21.700a1.500 1.500 0 0 1-1.700 0L1 20a1 1 0 0 1 0-1.500z" fill="#1070b8" /><path d="M22 0l8 3.500v23L22 30z" fill="#2ca4f1" /></svg>
        </TaskItem>
        <TaskItem $w={51} $ml={11} $open>
          <Chat>
            <svg width="31" height="31" viewBox="0 0 31 31"><path d="M2.200 29l2-7A13.300 13.300 0 1 1 9.300 27z" fill="none" stroke="#25d366" strokeWidth="2.600" /><path d="M10.500 8.500c1-.8 1.700-.3 2 .5l1 2.300c.2.600-1 1.500-1 2 .8 2 2.700 3.700 4.700 4.500.7 0 1.300-1.700 2-1.600l2.600 1.300c.7.400.5 1.500 0 2.300-1 1.500-3.300 1.900-5 1.200-4-1.500-6.800-4.500-8-7.500-.5-1.800.4-4 1.700-5z" fill="#25d366" /></svg>
            <CountBadge $x={18} $y={13} $s={25} $fs={15.5} $bg="#18401a">58</CountBadge>
          </Chat>
        </TaskItem>
        <Speed>
          <SpeedRow><span>U:</span><span><b>18.61</b> kB/s</span></SpeedRow>
          <SpeedRow><span>D:</span><span><b>3629.02</b> kB/s</span></SpeedRow>
        </Speed>
        <Tray>
          <Slot $w={18} $h={50} $ml={8}><Stroke size={18} box={18} w={1.500} color="#fff"><path d="M1.500 12.500L9 5l7.500 7.500" /></Stroke></Slot>
          <Slot $w={18} $h={50} $ml={13}><svg width="17" height="17" viewBox="0 0 17 17" fill="none" stroke="#fff" strokeWidth="1.300"><path d="M1 16C1 8 8 1 16 1" opacity=".45" /><path d="M4.500 16C4.500 10 10 5 16 5M8 16c0-4 4-7.500 8-7.500M11.500 16c0-2.500 2-4 4.500-4" opacity=".8" /><circle cx="14.800" cy="15" r="1.500" fill="#fff" stroke="none" /></svg></Slot>
          <Slot $w={21} $h={50} $ml={9}><svg width="21" height="16" viewBox="0 0 21 16" fill="none" stroke="#fff" strokeWidth="1.200"><path d="M6 3.500h12.500v9.500H4V8M19.500 6.500v3.500M2.500 1v2M5 .5V3M1 3.500h5V6L4 7.500 1.500 6z" /><rect x="6" y="5" width="11.500" height="6.800" fill="#fff" stroke="none" /></svg></Slot>
          <Slot $w={20} $h={50} $ml={10}><svg width="20" height="18" viewBox="0 0 20 18" fill="none" stroke="#fff" strokeWidth="1.200"><path d="M.8 6.500h2.700L8 2.500v13l-4.500-4H.8z" /><path d="M10.500 6.800q1.500 2.200 0 4.400M13.500 4.500q3 4.500 0 9" /><path d="M16.500 2q5 7 0 14" opacity=".5" /></svg></Slot>
          <Slot $w={30} $h={50} $ml={13}><Text $size={15}>ENG</Text></Slot>
        </Tray>
        <Clock><Text $size={15} $lh={23}>10:33 PM</Text><Text $size={15} $lh={23}>11-06-2025</Text></Clock>
        <Notice>
          <svg width="20" height="20" viewBox="0 0 20 20"><path d="M0 0h20v17H7l-3 3v-3H0z" fill="#fff" /><path d="M4 4.500h12M4 8.500h12M4 12.500h8" stroke="#2a4425" strokeWidth="1.300" /></svg>
          <CountBadge $x={10} $y={24} $s={21} $fs={14} $bg="#18551a">4</CountBadge>
        </Notice>
        <Peek />
      </Taskbar>
    </Screen>
  );
}
